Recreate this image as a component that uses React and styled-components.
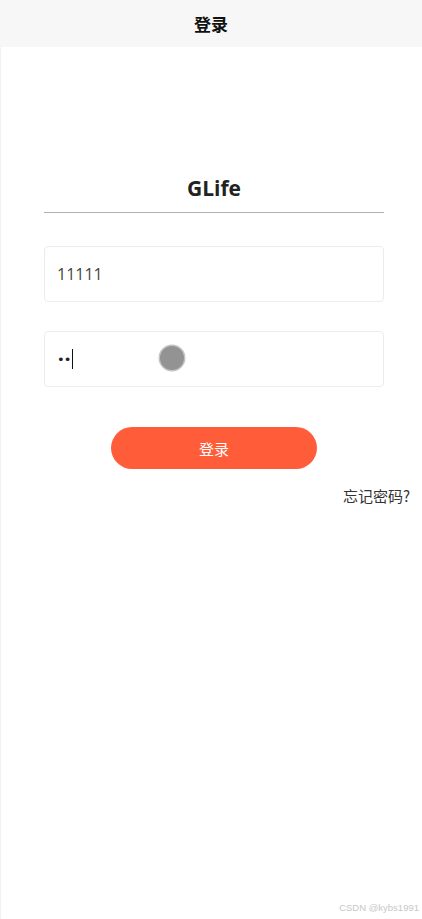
import React from 'react';
import styled, { createGlobalStyle } from 'styled-components';

const GlobalStyle = createGlobalStyle`
    html, body {
        margin: 0;
        padding: 0;
        background: #ffffff;
    }
    body {
        font-family: "Noto Sans CJK SC", "Open Sans", sans-serif;
        color: #333;
    }
`
const Page = styled.div`
    display: flex;
    flex-direction: column;
    width: 422px;
    height: 919px;
    position: relative;
    overflow: hidden;
`
const Header = styled.div`
    display: flex;
    justify-content: center;
    align-items: center;
    height: 47px;
    background: #f7f7f7;
    font-size: 17px;
    font-weight: bold;
    color: #111;
`
const Body = styled.div`
    flex: 1;
    display: flex;
    flex-direction: column;
    align-items: stretch;
    border-left: 1px solid #f2f2f2;
    padding: 127px 38px 0 43px;
`
const Title = styled.div`
    text-align: center;
    font-family: "Open Sans", sans-serif;
    font-size: 21px;
    font-weight: bold;
    color: #222;
    line-height: 28px;
    padding-bottom: 10px;
    border-bottom: 1px solid #b0b0b0;
`
const Field = styled.div`
    position: relative;
    box-sizing: border-box;
    display: flex;
    align-items: center;
    height: 56px;
    margin-top: ${p => p.$top}px;
    border: 1px solid #ececec;
    border-radius: 4px;
    padding: 0 12px;
    font-family: "Open Sans", sans-serif;
    font-size: 16px;
    color: #444;
`
const Dots = styled.span`
    font-family: "DejaVu Sans", sans-serif;
    font-size: 13px;
    letter-spacing: -1px;
    color: #222;
`
const Caret = styled.span`
    display: inline-block;
    width: 1px;
    height: 20px;
    background: #111;
    margin-left: 2px;
`
const Touch = styled.div`
    position: absolute;
    left: 115px;
    top: 14px;
    width: 24px;
    height: 24px;
    border-radius: 50%;
    background: #939393;
    box-shadow: 0 0 0 1.5px #c4c4c4;
`
const Button = styled.button`
    align-self: center;
    margin-top: 40px;
    width: 206px;
    height: 42px;
    border: none;
    border-radius: 21px;
    background: #ff5c39;
    color: #ffffff;
    font-family: "Noto Sans CJK SC", sans-serif;
    font-size: 15px;
`
const Forgot = styled.div`
    align-self: flex-end;
    margin-right: -26px;
    margin-top: 16px;
    font-size: 15px;
    color: #333;
`
const Watermark = styled.div`
    position: absolute;
    right: 3px;
    bottom: 6px;
    font-family: "Liberation Sans", sans-serif;
    font-size: 9.5px;
    color: #c8c8c8;
`

function App(){
    return (
        <Page>
            <GlobalStyle />
            <Header>登录</Header>
            <Body>
                <Title>GLife</Title>
                <Field $top={33}>11111</Field>
                <Field $top={29}>
                    <Dots>••</Dots><Caret />
                    <Touch />
                </Field>
                <Button>登录</Button>
                <Forgot>忘记密码?</Forgot>
            </Body>
            <Watermark>CSDN @kybs1991</Watermark>
        </Page>
    )
}
export default App;
